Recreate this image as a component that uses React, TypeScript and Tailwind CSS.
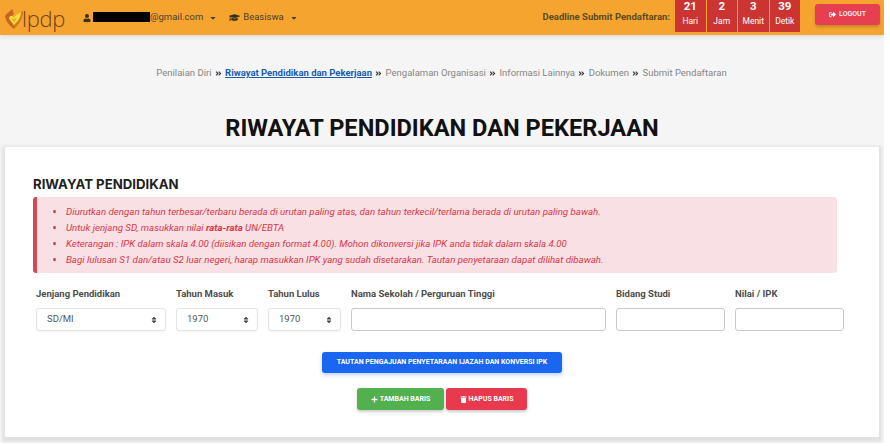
import { FaAngleDoubleRight, FaCaretDown, FaGraduationCap, FaPlus, FaSignOutAlt, FaSort, FaTrash, FaUser } from "react-icons/fa";

const steps = [
  { label: "Penilaian Diri" },
  { label: "Riwayat Pendidikan dan Pekerjaan", active: true },
  { label: "Pengalaman Organisasi" },
  { label: "Informasi Lainnya" },
  { label: "Dokumen" },
  { label: "Submit Pendaftaran" },
];

const countdown = [
  { value: "21", unit: "Hari" },
  { value: "2", unit: "Jam" },
  { value: "3", unit: "Menit" },
  { value: "39", unit: "Detik" },
];

function Logo() {
  return (
    <div className="flex items-center w-[60px]">
      <svg width="20" height="21" viewBox="0 0 20 21" className="shrink-0 -ml-[1px] -mr-[2px] mt-[1px]">
        <path d="M1 8 C3 5 6 3 8.500 1 C9 3 9 4 10 6 L5 11 C7 14 9 15 10 18 L10 21 C6 18 2 14 1 8Z" fill="#c9651f" />
        <path d="M19 3 C19 9 17 14 12 19 L10 21 L10 17 C13 14 16 9 15 5Z" fill="#d47a1e" />
        <path d="M5 10 C6 7 8 7 10 10 C11 8 13 6 17 4 C17 10 13 14 10 17 C8 14 6 12 5 10Z" fill="#f9dc3e" />
        <path d="M8 11 C9 10 9.500 11 10 12 C10.500 11 11.500 10 12.500 10 C12 12 11 13 10 14.500 C9.500 13 8.500 12 8 11Z" fill="#f0a020" />
      </svg>
      <span className="font-['Open_Sans',sans-serif] font-light text-[22px] leading-[26px] text-[#6e4214] tracking-[-0.3px]">lpdp</span>
    </div>
  );
}

function Caret() {
  return <FaCaretDown className="text-[8px] ml-[6px] text-[#4a3a1c]" />;
}

function Header() {
  return (
    <header className="h-[35px] shrink-0 bg-[#f5a52f] flex items-center pl-[5px] pr-[4px] shadow-[0_2px_4px_rgba(0,0,0,0.1)] text-[#4a4030]">
      <Logo />
      <div className="flex items-center ml-[18px] text-[9.500px]">
        <FaUser className="text-[8px] text-[#3a3020] mr-[2px]" />
        <span className="w-[57px] h-[10px] bg-black -mt-[1px]" />
        <span>@gmail.com</span>
        <Caret />
      </div>
      <div className="flex items-center ml-[12px] text-[9.500px]">
        <FaGraduationCap className="text-[11px] text-[#3a3020] mr-[3px]" />
        <span>Beasiswa</span>
        <Caret />
      </div>
      <span className="ml-auto mr-[5px] text-[9.500px] font-bold text-[#5c4a20]">Deadline Submit Pendaftaran:</span>
      <div className="flex gap-[1px] h-[32px] self-start">
        {countdown.map((item) => (
          <div key={item.unit} className="w-[30.500px] bg-[#cc3431] text-white flex flex-col items-center">
            <span className="text-[11.500px] font-bold leading-[12px]">{item.value}</span>
            <span className="text-[8.500px] leading-[10px] mt-[4px]">{item.unit}</span>
          </div>
        ))}
      </div>
      <button className="ml-[15px] w-[65px] h-[21px] -mt-[6px] rounded-[3px] bg-[#e83e52] text-white text-[7px] font-medium flex items-center justify-center gap-[3px] shadow-[0_2px_3px_rgba(0,0,0,0.2)]">
        <FaSignOutAlt className="text-[7px]" />
        LOGOUT
      </button>
    </header>
  );
}

function Breadcrumb() {
  return (
    <nav className="flex items-center justify-center h-[14px] mt-[31px] text-[9.500px] text-[#868686] ml-[-1px]">
      {steps.map((step, index) => (
        <div key={step.label} className="flex items-center">
          {index > 0 && <FaAngleDoubleRight className="text-[7px] mx-[3.300px] text-[#333333]" />}
          <span className={step.active ? "font-bold text-[#1a5db0] underline" : ""}>{step.label}</span>
        </div>
      ))}
    </nav>
  );
}

function SelectBox({ width, value }: { width: string; value: string }) {
  return (
    <div className={`${width} h-[23px] pl-[10px] pr-[7px] flex items-center justify-between border border-[#e3e3e3] rounded-[3px] bg-white text-[9.500px] text-[#555555] shadow-[0_1px_1px_rgba(0,0,0,0.04)]`}>
      {value}
      <FaSort className="text-[8px] text-[#444444]" />
    </div>
  );
}

function TextBox({ width }: { width: string }) {
  return <input className={`${width} h-[23px] border border-[#c9c9c9] rounded-[3px] bg-white`} />;
}

function Field({ label, width, children }: { label: string; width: string; children: React.ReactNode }) {
  return (
    <div className={`${width} flex flex-col`}>
      <label className="text-[9.500px] font-bold text-[#4d4d4d] leading-[12px] mb-[8px]">{label}</label>
      {children}
    </div>
  );
}

function EducationForm() {
  return (
    <div className="flex gap-[10px] ml-[3px] mt-[15px]">
      <Field label="Jenjang Pendidikan" width="w-[130px]">
        <SelectBox width="w-[130px]" value="SD/MI" />
      </Field>
      <Field label="Tahun Masuk" width="w-[82px]">
        <SelectBox width="w-[82px]" value="1970" />
      </Field>
      <Field label="Tahun Lulus" width="w-[73px]">
        <SelectBox width="w-[73px]" value="1970" />
      </Field>
      <Field label="Nama Sekolah / Perguruan Tinggi" width="w-[255px]">
        <TextBox width="w-[255px]" />
      </Field>
      <Field label="Bidang Studi" width="w-[109px]">
        <TextBox width="w-[109px]" />
      </Field>
      <Field label="Nilai / IPK" width="w-[109px]">
        <TextBox width="w-[109px]" />
      </Field>
    </div>
  );
}

export default function App() {
  return (
    <div className="w-[884px] h-[443px] bg-[#f5f5f5] flex flex-col font-['Roboto',sans-serif] overflow-hidden">
      <Header />
      <Breadcrumb />
      <h1 className="text-[23.600px] font-bold leading-[30px] text-[#111111] text-center mt-[33px]">RIWAYAT PENDIDIKAN DAN PEKERJAAN</h1>
      <main className="mx-[5px] mt-[4px] h-[290px] bg-white pl-[28px] pt-[28px] shadow-[0_2px_3px_3px_rgba(0,0,0,0.08)]">
        <h2 className="text-[13.200px] font-['Inter',sans-serif] font-bold leading-[18px] text-[#222222]">RIWAYAT PENDIDIKAN</h2>
        <div className="w-[804px] h-[76px] mt-[4px] rounded-[3px] border-l-[4px] border-[#d2495a] bg-[#f9e0e4] pl-[19px] pt-[7px] text-[#dc3545] italic text-[9.700px]">
          <ul className="list-disc pl-[10px] leading-[16px]">
            <li>Diurutkan dengan tahun terbesar/terbaru berada di urutan paling atas, dan tahun terkecil/terlama berada di urutan paling bawah.</li>
            <li>Untuk jenjang SD, masukkan nilai <b>rata-rata</b> UN/EBTA</li>
            <li>Keterangan : IPK dalam skala 4.00 (diisikan dengan format 4.00). Mohon dikonversi jika IPK anda tidak dalam skala 4.00</li>
            <li>Bagi lulusan S1 dan/atau S2 luar negeri, harap masukkan IPK yang sudah disetarakan. Tautan penyetaraan dapat dilihat dibawah.</li>
          </ul>
        </div>
        <EducationForm />
        <div className="flex justify-center mt-[21px] w-[818px]">
          <button className="w-[240px] h-[21px] rounded-[3px] bg-[#1a66f0] text-white text-[7px] font-bold shadow-[0_2px_4px_rgba(26,102,240,0.3)]">
            TAUTAN PENGAJUAN PENYETARAAN IJAZAH DAN KONVERSI IPK
          </button>
        </div>
        <div className="flex gap-[2px] mt-[15px] ml-[324px]">
          <button className="w-[87px] h-[22px] rounded-[3px] bg-[#52b04e] text-white text-[7px] font-bold flex items-center justify-center gap-[2px] shadow-[0_2px_3px_rgba(0,0,0,0.2)]">
            <FaPlus className="text-[7px]" />
            TAMBAH BARIS
          </button>
          <button className="w-[81px] h-[22px] rounded-[3px] bg-[#e83a4e] text-white text-[7px] font-bold flex items-center justify-center gap-[2px] shadow-[0_2px_3px_rgba(0,0,0,0.2)]">
            <FaTrash className="text-[7px]" />
            HAPUS BARIS
          </button>
        </div>
      </main>
    </div>
  );
}
